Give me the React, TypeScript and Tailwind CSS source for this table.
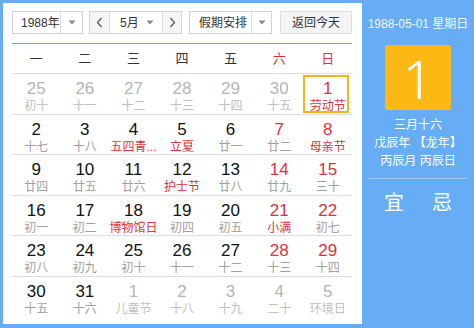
import React from "react";

type Cell = { d: string; l: string; dim?: boolean; red?: boolean; hl?: boolean; lred?: boolean };

const rows: Cell[][] = [
  [
    { d: "25", l: "初十", dim: true },
    { d: "26", l: "十一", dim: true },
    { d: "27", l: "十二", dim: true },
    { d: "28", l: "十三", dim: true },
    { d: "29", l: "十四", dim: true },
    { d: "30", l: "十五", dim: true },
    { d: "1", l: "劳动节", red: true, lred: true, hl: true },
  ],
  [
    { d: "2", l: "十七" },
    { d: "3", l: "十八" },
    { d: "4", l: "五四青...", lred: true },
    { d: "5", l: "立夏", lred: true },
    { d: "6", l: "廿一" },
    { d: "7", l: "廿二", red: true },
    { d: "8", l: "母亲节", red: true, lred: true },
  ],
  [
    { d: "9", l: "廿四" },
    { d: "10", l: "廿五" },
    { d: "11", l: "廿六" },
    { d: "12", l: "护士节", lred: true },
    { d: "13", l: "廿八" },
    { d: "14", l: "廿九", red: true },
    { d: "15", l: "三十", red: true },
  ],
  [
    { d: "16", l: "初一" },
    { d: "17", l: "初二" },
    { d: "18", l: "博物馆日", lred: true },
    { d: "19", l: "初四" },
    { d: "20", l: "初五" },
    { d: "21", l: "小满", red: true, lred: true },
    { d: "22", l: "初七", red: true },
  ],
  [
    { d: "23", l: "初八" },
    { d: "24", l: "初九" },
    { d: "25", l: "初十" },
    { d: "26", l: "十一" },
    { d: "27", l: "十二" },
    { d: "28", l: "十三", red: true },
    { d: "29", l: "十四", red: true },
  ],
  [
    { d: "30", l: "十五" },
    { d: "31", l: "十六" },
    { d: "1", l: "儿童节", dim: true },
    { d: "2", l: "十八", dim: true },
    { d: "3", l: "十九", dim: true },
    { d: "4", l: "二十", dim: true },
    { d: "5", l: "环境日", dim: true },
  ],
];

const weeks = ["一", "二", "三", "四", "五", "六", "日"];

function Caret() {
  return (
    <svg width="8" height="5" viewBox="0 0 8 5">
      <path d="M0.5 0.5 L7.5 0.5 L4 4.5 Z" fill="#888" />
    </svg>
  );
}

function Chevron({ dir }: { dir: "l" | "r" }) {
  return (
    <svg width="7" height="11" viewBox="0 0 7 11">
      <path
        d={dir === "l" ? "M5.5 1 L1.5 5.5 L5.5 10" : "M1.5 1 L5.5 5.5 L1.5 10"}
        fill="none"
        stroke="#555"
        strokeWidth="1.2"
      />
    </svg>
  );
}

export default function App() {
  return (
    <div
      className="w-[474px] h-[328px] bg-[#66adf6] flex overflow-hidden"
      style={{ fontFamily: '"Liberation Sans", "Noto Sans CJK SC", sans-serif' }}
    >
      <div className="ml-[3px] mt-[3px] w-[359px] h-[321px] bg-white pl-[9px] pt-[8px]">
        {/* controls */}
        <div className="flex h-[23px] text-[12px] text-[#333] whitespace-nowrap">
          <div className="w-[71px] h-[23px] border border-[#d3d3d3] flex items-center">
            <div className="w-[48px] h-full flex items-center pl-[8px] border-r border-[#e0e0e0] whitespace-nowrap">1988年</div>
            <div className="flex-1 flex items-center justify-center"><Caret /></div>
          </div>
          <div className="ml-[6px] w-[93px] h-[23px] border border-[#d3d3d3] flex items-center">
            <div className="w-[20px] h-full bg-[#f5f5f5] flex items-center justify-center border-r border-[#e0e0e0]"><Chevron dir="l" /></div>
            <div className="w-[53px] h-full flex items-center pl-[10px] border-r border-[#e0e0e0]">
              <span className="flex-1">5月</span>
              <span className="pr-[8px] flex items-center"><Caret /></span>
            </div>
            <div className="flex-1 h-full bg-[#f5f5f5] flex items-center justify-center"><Chevron dir="r" /></div>
          </div>
          <div className="ml-[7px] w-[83px] h-[23px] border border-[#d3d3d3] flex items-center">
            <div className="w-[62px] h-full flex items-center pl-[9px] border-r border-[#e0e0e0]">假期安排</div>
            <div className="flex-1 flex items-center justify-center"><Caret /></div>
          </div>
          <div className="ml-[8px] w-[72px] h-[23px] border border-[#dedede] bg-[#f5f5f5] flex items-center justify-center">返回今天</div>
        </div>

        {/* calendar */}
        <div className="mt-[9px] w-[340px] border-t border-[#5aa7f5]">
          <div className="grid grid-cols-7 h-[30px] border-b border-[#dcdcdc] text-[13px]">
            {weeks.map((w, i) => (
              <div key={w} className={"flex items-center justify-center " + (i >= 5 ? "text-[#e0313b]" : "text-[#333]")}>
                {w}
              </div>
            ))}
          </div>
          {rows.map((r, ri) => (
            <div
              key={ri}
              className={"grid grid-cols-7 h-[40.5px] " + (ri < rows.length - 1 ? "border-b border-[#dcdcdc]" : "")}
            >
              {r.map((c, ci) => (
                <div key={ci} className="relative flex flex-col items-center pt-[5px]">
                  {c.hl && (
                    <div className="absolute left-0 right-[3px] top-[1px] bottom-[1px] border-2 border-[#f6b31c]" />
                  )}
                  <div
                    className={
                      "text-[17px] leading-[20px] " +
                      (c.dim ? "text-[#b5b5b5]" : c.red ? "text-[#e0313b]" : "text-[#111]")
                    }
                  >
                    {c.d}
                  </div>
                  <div
                    className={
                      "text-[12px] leading-[14px] whitespace-nowrap " +
                      (c.dim ? "text-[#c0c0c0]" : c.lred ? "text-[#e0313b]" : "text-[#a0a0a0]")
                    }
                  >
                    {c.l}
                  </div>
                </div>
              ))}
            </div>
          ))}
        </div>
      </div>

      {/* right panel */}
      <div className="flex-1 flex flex-col items-center text-white">
        <div className="mt-[16px] text-[12px] leading-[16px] text-[#f2f8ff]">1988-05-01 星期日</div>
        <div
          className="mt-[13px] w-[66px] h-[65px] bg-[#fdb813] rounded-[2px] flex items-center justify-center text-[54px] leading-none font-light"
          style={{ fontFamily: '"Noto Sans", "Open Sans", sans-serif' }}
        >
          1
        </div>
        <div className="mt-[6px] text-[12px] leading-[18px] flex flex-col items-center">
          <div>三月十六</div>
          <div>戊辰年 【龙年】</div>
          <div>丙辰月 丙辰日</div>
        </div>
        <div className="mt-[8px] w-[98px] h-px bg-[#a5cdf8]" />
        <div className="mt-[12px] flex gap-[28px] text-[20px] leading-[24px]">
          <span>宜</span>
          <span>忌</span>
        </div>
      </div>
    </div>
  );
}
